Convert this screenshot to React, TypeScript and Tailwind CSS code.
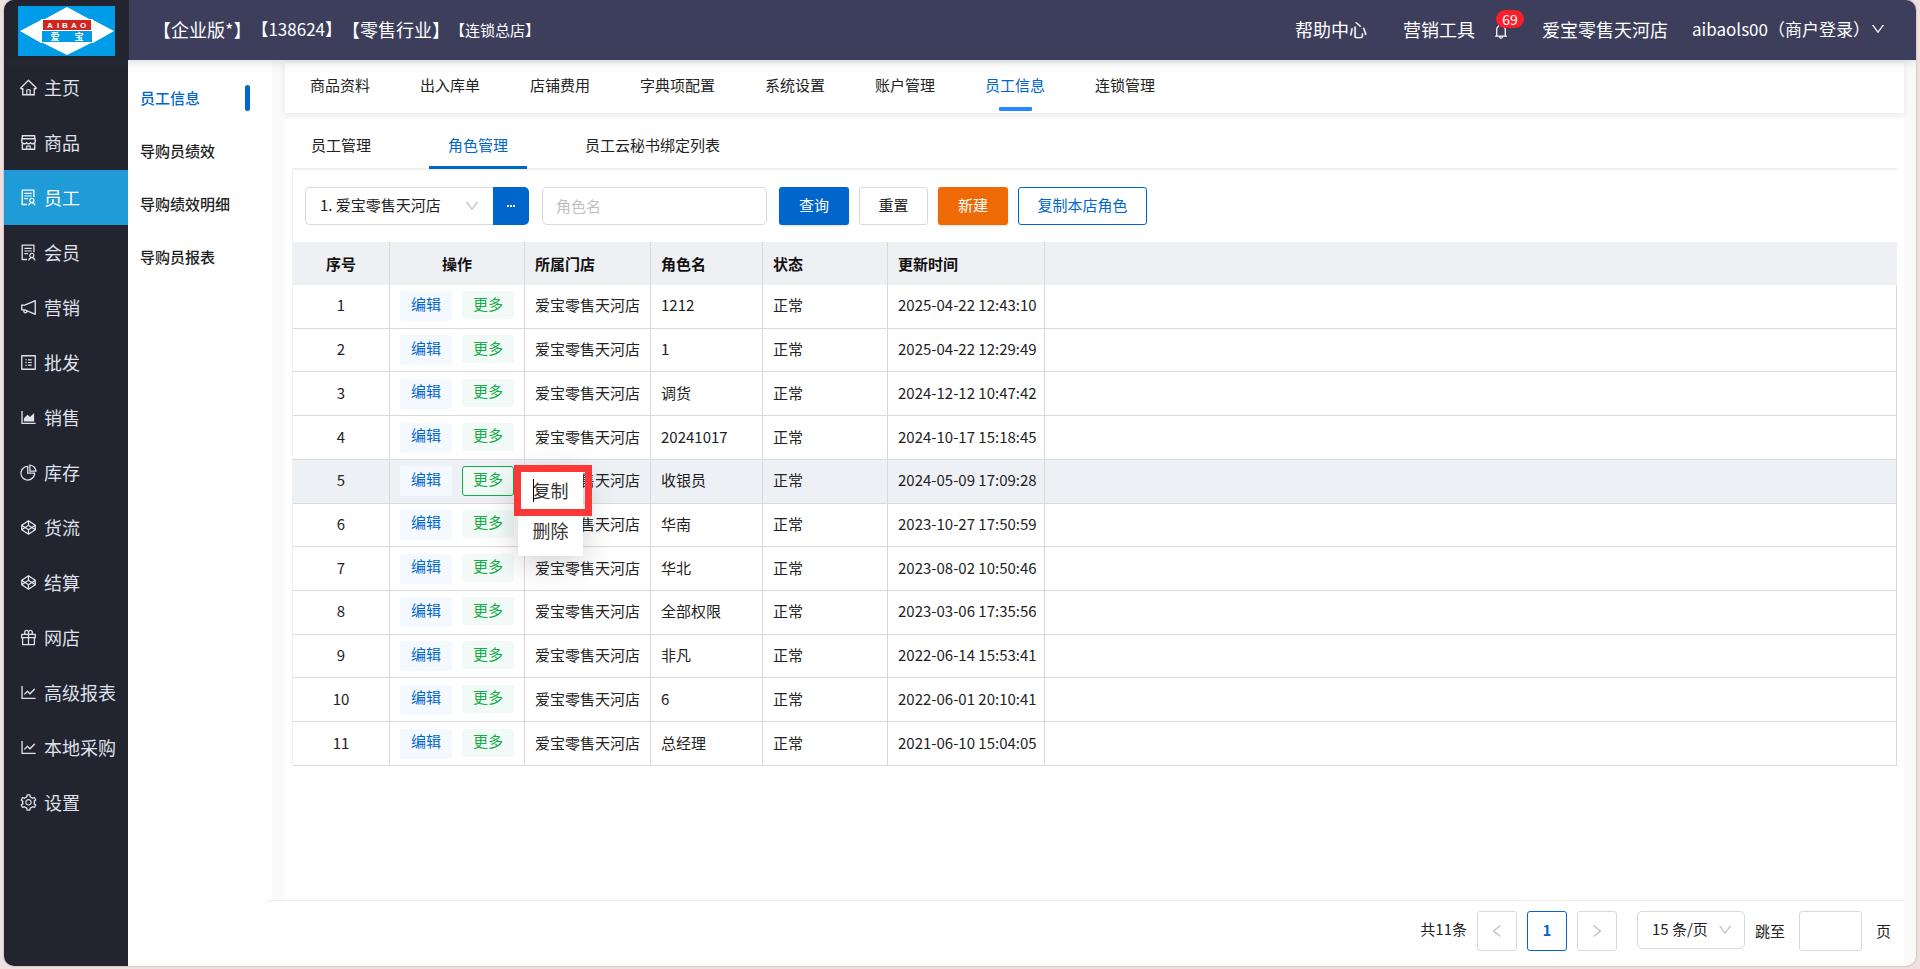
import { useState } from "react";
import type { ComponentType } from "react";
import {
  AiOutlineAreaChart,
  AiOutlineBell,
  AiOutlineCodepen,
  AiOutlineDown,
  AiOutlineGift,
  AiOutlineHome,
  AiOutlineLeft,
  AiOutlineLineChart,
  AiOutlineNotification,
  AiOutlinePieChart,
  AiOutlineProfile,
  AiOutlineRight,
  AiOutlineSetting,
  AiOutlineShop,
  AiOutlineSolution,
} from "react-icons/ai";

type MenuEntry = { label: string; icon: ComponentType<{ className?: string }> };

const mainMenu: MenuEntry[] = [
  { label: "主页", icon: AiOutlineHome },
  { label: "商品", icon: AiOutlineShop },
  { label: "员工", icon: AiOutlineSolution },
  { label: "会员", icon: AiOutlineSolution },
  { label: "营销", icon: AiOutlineNotification },
  { label: "批发", icon: AiOutlineProfile },
  { label: "销售", icon: AiOutlineAreaChart },
  { label: "库存", icon: AiOutlinePieChart },
  { label: "货流", icon: AiOutlineCodepen },
  { label: "结算", icon: AiOutlineCodepen },
  { label: "网店", icon: AiOutlineGift },
  { label: "高级报表", icon: AiOutlineLineChart },
  { label: "本地采购", icon: AiOutlineLineChart },
  { label: "设置", icon: AiOutlineSetting },
];

const subMenu = ["员工信息", "导购员绩效", "导购绩效明细", "导购员报表"];
const sections = ["商品资料", "出入库单", "店铺费用", "字典项配置", "系统设置", "账户管理", "员工信息", "连锁管理"];
const tabs = ["员工管理", "角色管理", "员工云秘书绑定列表"];

const store = "爱宝零售天河店";
const roles = [
  { name: "1212", updated: "2025-04-22 12:43:10" },
  { name: "1", updated: "2025-04-22 12:29:49" },
  { name: "调货", updated: "2024-12-12 10:47:42" },
  { name: "20241017", updated: "2024-10-17 15:18:45" },
  { name: "收银员", updated: "2024-05-09 17:09:28" },
  { name: "华南", updated: "2023-10-27 17:50:59" },
  { name: "华北", updated: "2023-08-02 10:50:46" },
  { name: "全部权限", updated: "2023-03-06 17:35:56" },
  { name: "非凡", updated: "2022-06-14 15:53:41" },
  { name: "6", updated: "2022-06-01 20:10:41" },
  { name: "总经理", updated: "2021-06-10 15:04:05" },
];

function Logo() {
  return (
    <svg viewBox="0 0 97 50" className="h-[50px] w-[97px]" role="img" aria-label="AIBAO 爱宝">
      <rect width="97" height="50" fill="#009ce8" />
      <path d="M49 1 73 14H25Z M49 49 73 37H25Z M2 25 23 14V37Z M96 25 75 14V37Z" fill="#fff" />
      <rect x="23" y="13" width="52" height="24" fill="#fff" />
      <rect x="25" y="14" width="48" height="10" fill="#d0261f" />
      <rect x="24" y="25" width="50" height="11" fill="#009ce8" />
      <g fill="#fff" fontWeight="700" textAnchor="middle" fontFamily="'Liberation Sans', 'Noto Sans CJK SC', sans-serif">
        <g fontSize="8">
          <text x="32" y="22">A</text>
          <text x="40" y="22">I</text>
          <text x="47" y="22">B</text>
          <text x="56" y="22">A</text>
          <text x="65" y="22">O</text>
        </g>
        <g fontSize="9">
          <text x="37" y="34">爱</text>
          <text x="61" y="34">宝</text>
        </g>
      </g>
    </svg>
  );
}

function TopBar() {
  return (
    <header className="relative z-20 flex h-[60px] shrink-0 bg-[#3d3e5c] text-lg leading-6 text-white shadow-[0_2px_10px_rgba(60,60,90,0.18)]">
      <div className="flex w-[125px] shrink-0 items-center bg-[#22242f] pt-[2px] pl-[14px]">
        <Logo />
      </div>
      <div className="flex items-center pb-[2px] pl-6 whitespace-nowrap">
        <span>【企业版*】</span>
        <span className="text-[17px]">【138624】</span>
        <span>【零售行业】</span>
        <span className="pt-[2px] text-[15px]">【连锁总店】</span>
      </div>
      <nav className="ml-auto flex items-center pr-[30px] pb-[2px] whitespace-nowrap">
        <a href="#help">帮助中心</a>
        <a href="#tools" className="ml-9">营销工具</a>
        <button type="button" aria-label="通知" className="relative ml-[17px] flex pt-1">
          <AiOutlineBell className="size-[18px]" />
          <span className="absolute -top-[8px] left-1 flex h-[18px] w-7 items-center justify-center rounded-full bg-[#fb1f2b] text-sm">69</span>
        </button>
        <a href="#store" className="ml-8">{store}</a>
        <button type="button" className="ml-6 flex items-center text-[17px]">
          aibaols00（商户登录）
          <AiOutlineDown className="size-4" />
        </button>
      </nav>
    </header>
  );
}

function Sidebar() {
  return (
    <nav className="w-[124px] shrink-0 bg-[#22242f]">
      <ul>
        {mainMenu.map(({ label, icon: Icon }, i) => (
          <li key={label}>
            <a
              href={"#m" + i}
              className={
                "flex h-[55px] items-center gap-[6px] pl-[15px] text-lg leading-6 whitespace-nowrap " +
                (label === "员工" ? "bg-[#1f9bd7] text-white" : "text-[#dfe2ec]")
              }
            >
              <Icon className="size-[19px] shrink-0" />
              <span className="pb-[2px]">{label}</span>
            </a>
          </li>
        ))}
      </ul>
    </nav>
  );
}

function SubMenu() {
  return (
    <nav className="w-36 shrink-0 bg-white pt-3">
      <ul>
        {subMenu.map((label, i) => (
          <li key={label}>
            <a
              href={"#s" + i}
              className={
                "flex h-[53px] items-center justify-between pr-[22px] pb-[2px] pl-3 text-[15px] leading-5 font-medium whitespace-nowrap " +
                (i === 0 ? "text-[#0066cc]" : "text-[#222]")
              }
            >
              {label}
              {i === 0 && <span className="h-[26px] w-[5px] rounded-sm bg-[#0066cc]" />}
            </a>
          </li>
        ))}
      </ul>
    </nav>
  );
}

function Filters() {
  return (
    <form className="flex items-center border-l border-[#f0f0f0] py-[17px] pl-3" onSubmit={(e) => e.preventDefault()}>
      <div className="relative">
        <select
          aria-label="门店"
          className="h-[38px] w-[188px] appearance-none rounded-l-[5px] border border-r-0 border-[#d9d9d9] bg-white pb-[2px] pl-[14px] text-[15px]"
        >
          <option>1. {store}</option>
        </select>
        <AiOutlineDown className="pointer-events-none absolute top-[11px] right-[13px] size-4 text-[#bfbfbf]" />
      </div>
      <button type="button" aria-label="选择门店" className="flex h-[38px] w-9 items-center justify-center gap-px rounded-r-[5px] bg-[#0066cc]">
        <span className="size-[2px] bg-white" />
        <span className="size-[2px] bg-white" />
        <span className="size-[2px] bg-white" />
      </button>
      <input
        aria-label="角色名"
        placeholder="角色名"
        className="ml-[13px] h-[38px] w-[225px] rounded-[5px] border border-[#d9d9d9] px-[13px] pb-[2px] placeholder:text-[#bfbfbf]"
      />
      <div className="ml-3 flex gap-[10px]">
        <button type="submit" className="h-[38px] w-[70px] rounded-[3px] bg-[#0066cc] pb-[2px] text-white shadow-sm">查询</button>
        <button type="reset" className="h-[38px] w-[69px] rounded-[3px] border border-[#d9d9d9] bg-white pb-[2px]">重置</button>
        <button type="button" className="h-[38px] w-[70px] rounded-[3px] bg-[#ed6a06] pb-[2px] text-white shadow-sm">新建</button>
        <button type="button" className="h-[38px] w-[129px] rounded-[3px] border border-[#0066cc] bg-white pb-[2px] text-[#0066cc]">复制本店角色</button>
      </div>
    </form>
  );
}

function MoreMenu() {
  return (
    <div className="absolute top-1 left-full z-10 ml-1 w-[65px] rounded-[3px] bg-white text-lg leading-6 text-[#333] shadow-[0_6px_32px_rgba(0,0,0,0.2)]">
      <button type="button" className="flex h-[41px] w-full items-center justify-center pb-[2px]">复制</button>
      <button type="button" className="flex h-[45px] w-full items-start justify-center pt-[7px]">删除</button>
      <span className="absolute top-[9px] left-[15px] h-[23px] w-px bg-black" />
      <span className="absolute -top-[5px] -left-1 h-[51px] w-[78px] border-[7px] border-[#fb3838]" />
    </div>
  );
}

function RoleTable() {
  const [openRow] = useState(4);
  const th = "border-r border-[#d9d9d9] px-[10px]";
  const td = "border-r border-b border-[#d9d9d9] px-[10px] pb-[2px]";
  return (
    <table className="h-[524px] w-full table-fixed border-separate border-spacing-0 border-l border-[#f0f0f0] whitespace-nowrap">
      <colgroup>
        <col className="w-[97px]" />
        <col className="w-[135px]" />
        <col className="w-[126px]" />
        <col className="w-[112px]" />
        <col className="w-[125px]" />
        <col className="w-[157px]" />
        <col />
      </colgroup>
      <thead>
        <tr className="h-[43px] bg-[#eff0f4] text-left text-[#111]">
          <th className={th + " text-center"}>序号</th>
          <th className={th + " text-center"}>操作</th>
          <th className={th}>所属门店</th>
          <th className={th}>角色名</th>
          <th className={th}>状态</th>
          <th className={th}>更新时间</th>
          <th />
        </tr>
      </thead>
      <tbody>
        {roles.map((role, i) => (
          <tr key={role.name} className={"h-[43px] " + (i === openRow ? "bg-[#edf0f4]" : "bg-white")}>
            <td className={td + " text-center"}>{i + 1}</td>
            <td className="border-r border-b border-[#d9d9d9] px-[10px]">
              <div className="flex items-start gap-[10px]">
                <button type="button" className="h-[30px] w-[52px] rounded-[3px] bg-[#f3f9ff] pb-[5px] text-[#0066cc]">编辑</button>
                <div className="relative">
                  <button
                    type="button"
                    className={
                      "w-[52px] rounded-[3px] border bg-[#f1faf6] text-[#14ad46] " +
                      (i === openRow ? "h-[30px] border-[#14ad46] pb-[5px]" : "h-7 border-transparent pb-[3px]")
                    }
                  >
                    更多
                  </button>
                  {i === openRow && <MoreMenu />}
                </div>
              </div>
            </td>
            <td className={td}>{store}</td>
            <td className={td}>{role.name}</td>
            <td className={td}>正常</td>
            <td className={td}>{role.updated}</td>
            <td className={td} />
          </tr>
        ))}
      </tbody>
    </table>
  );
}

function Pagination() {
  const box = "flex size-10 items-center justify-center rounded-[3px] border bg-white ";
  return (
    <footer className="-ml-[18px] flex h-[66px] items-start justify-end border-t border-[#ebebeb] bg-white pt-[10px] pr-[13px]">
      <span className="mr-[10px] leading-9">共11条</span>
      <div className="flex gap-[10px]">
        <button type="button" aria-label="上一页" className={box + "border-[#d9d9d9] text-[#bfbfbf]"}>
          <AiOutlineLeft className="size-4" />
        </button>
        <button type="button" className={box + "border-[#0066cc] pb-[2px] font-bold text-[#0066cc]"}>1</button>
        <button type="button" aria-label="下一页" className={box + "border-[#d9d9d9] text-[#bfbfbf]"}>
          <AiOutlineRight className="size-4" />
        </button>
      </div>
      <div className="relative ml-5">
        <select aria-label="每页条数" className="h-[38px] w-[108px] appearance-none rounded-[5px] border border-[#d9d9d9] bg-white pb-[2px] pl-[14px]">
          <option>15 条/页</option>
        </select>
        <AiOutlineDown className="pointer-events-none absolute top-[11px] right-3 size-4 text-[#bfbfbf]" />
      </div>
      <label className="ml-[10px] flex items-center">
        跳至
        <input className="mx-[14px] h-10 w-[63px] rounded-[3px] border border-[#d9d9d9] px-2" />
        页
      </label>
    </footer>
  );
}

export default function App() {
  return (
    <div className="flex min-h-screen flex-col bg-[#f0e1e1] pr-1 pb-[3px] pl-1 font-['Noto_Sans_CJK_SC',sans-serif] text-[15px] leading-5 text-[#222]">
      <div className="flex grow flex-col overflow-hidden rounded-[10px] bg-[#fafafa] shadow-[0_0_2px_rgba(0,0,0,0.35)]">
        <TopBar />
        <div className="flex grow">
          <Sidebar />
          <SubMenu />
          <main className="flex min-w-0 grow flex-col pt-[3px] pr-3 pl-[13px]">
            <nav className="flex h-[50px] shrink-0 gap-[50px] bg-white pl-[25px] shadow-[0_1px_6px_rgba(0,0,0,0.08)]">
              {sections.map((label) => (
                <a
                  key={label}
                  href={"#" + label}
                  className={"flex flex-col items-center pt-3 whitespace-nowrap " + (label === "员工信息" ? "text-[#0066cc]" : "")}
                >
                  {label}
                  {label === "员工信息" && <span className="mt-3 h-1 w-[33px] rounded-[1px] bg-[#2489ff]" />}
                </a>
              ))}
            </nav>
            <section className="mt-[6px] grow bg-white pr-[7px] pl-[7px]">
              <div role="tablist" className="flex h-[51px] gap-[39px] border-b-2 border-[#f0f0f0]">
                {tabs.map((label, i) => (
                  <button
                    key={label}
                    type="button"
                    role="tab"
                    aria-selected={i === 1}
                    className={
                      "-mb-px border-b-[3px] px-[19px] pt-1 whitespace-nowrap " +
                      (i === 1 ? "border-[#0066cc] text-[#0066cc]" : "border-transparent")
                    }
                  >
                    {label}
                  </button>
                ))}
              </div>
              <Filters />
              <RoleTable />
            </section>
            <Pagination />
          </main>
        </div>
      </div>
    </div>
  );
}
